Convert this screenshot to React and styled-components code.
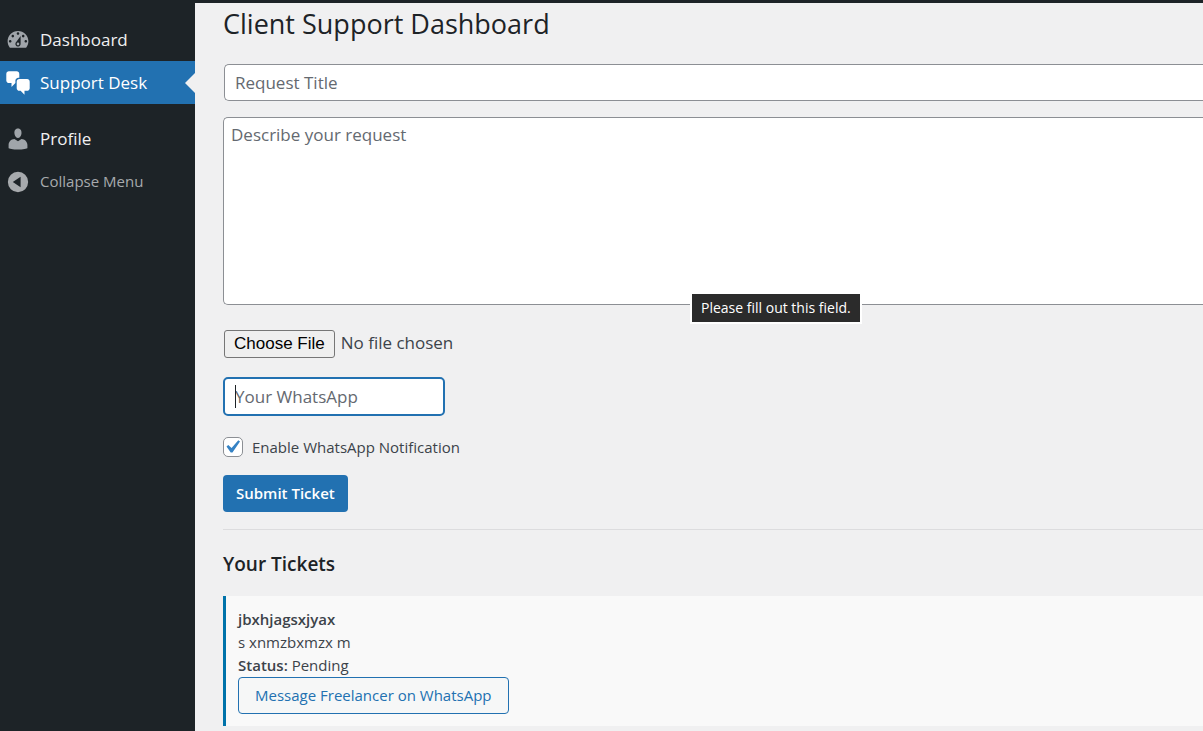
import React, { useState } from 'react'
import styled, { createGlobalStyle } from 'styled-components'

const GlobalStyle = createGlobalStyle`
    *, *::before, *::after {
      box-sizing: border-box;
    }

    body {
      margin: 0;
      background-color: #f0f0f1;
      color: #3c434a;
      font-family: 'Open Sans', 'Noto Sans', sans-serif;
      font-size: 15px;
      line-height: 23px;
    }
`

const Page = styled.div`
    display: flex;
    min-height: 100vh;
    border-top: 3px solid #1d2327;
    overflow: hidden;
`

const Sidebar = styled.nav`
    flex: 0 0 195px;
    padding-top: 15px;
    background-color: #1d2327;
`

const MenuList = styled.ul`
    margin: 0;
    padding: 0;
    list-style: none;
`

const MenuItem = styled.li`
    margin-top: ${(props) => (props.$spaced ? '13px' : '0')};
`

const MenuLink = styled.a`
    position: relative;
    display: flex;
    align-items: center;
    gap: 9px;
    height: 43px;
    padding-left: 5px;
    background-color: ${(props) => (props.$current ? '#2271b1' : 'transparent')};
    color: ${(props) => (props.$current ? '#ffffff' : '#f0f0f1')};
    font-size: 17px;
    text-decoration: none;

    svg {
      fill: ${(props) => (props.$current ? '#ffffff' : '#a0a5aa')};
    }

    &::after {
      content: '';
      display: ${(props) => (props.$current ? 'block' : 'none')};
      position: absolute;
      right: 0;
      border: 10px solid transparent;
      border-right-color: #f0f0f1;
      border-left: 0;
    }
`

const CollapseButton = styled.button`
    display: flex;
    align-items: center;
    gap: 9px;
    width: 100%;
    height: 43px;
    padding: 0 0 0 5px;
    border: 0;
    background: none;
    color: #a7aaad;
    font: inherit;
    cursor: pointer;

    svg {
      fill: #a7aaad;
    }
`

const Content = styled.main`
    flex: 1;
    min-width: 0;
    padding-left: 28px;
`

const Title = styled.h1`
    margin: 0;
    padding-top: 2px;
    color: #1d2327;
    font-size: 27px;
    font-weight: 400;
    line-height: 38px;
`

const TicketForm = styled.form`
    display: flex;
    flex-direction: column;
    align-items: flex-start;
    padding: 21px 0 17px;
    border-bottom: 1px solid #dcdcde;
`

const TitleInput = styled.input`
    align-self: stretch;
    height: 37px;
    margin: 0 0 16px 1px;
    padding: 0 10px;
    border: 1px solid #8c8f94;
    border-right: 0;
    border-radius: 5px 0 0 5px;
    background-color: #ffffff;
    font: inherit;
    font-size: 17px;

    &::placeholder {
      color: #646970;
    }
`

const DescriptionField = styled.div`
    position: relative;
    display: flex;
    align-self: stretch;
    margin-bottom: 25px;
`

const Description = styled.textarea`
    flex: 1;
    height: 188px;
    padding: 4px 7px;
    border: 1px solid #8c8f94;
    border-right: 0;
    border-radius: 5px 0 0 5px;
    background-color: #ffffff;
    font: inherit;
    font-size: 17px;
    line-height: 26px;
    resize: none;

    &::placeholder {
      color: #646970;
    }
`

const Tooltip = styled.div`
    position: absolute;
    bottom: -19px;
    left: 467px;
    padding: 2px 9px 3px;
    border: 2px solid #ffffff;
    background-color: #2b2b2b;
    color: #ffffff;
    box-sizing: content-box;
    font-size: 14px;
    white-space: nowrap;
`

const FileInput = styled.input`
    height: 30px;
    margin: 0 0 17px 1px;
    color: #3c434a;
    font: inherit;
    font-size: 17px;
    line-height: 26px;

    &::file-selector-button {
      height: 28px;
      margin: 0 6px 0 0;
      padding: 0 9px;
      border: 1px solid #767676;
      border-radius: 3px;
      background-color: #efefef;
      color: #000000;
      font: 17px 'Liberation Sans', Arial, sans-serif;
    }
`

const PhoneField = styled.div`
    position: relative;
    display: flex;
    margin-bottom: 21px;
`

const PhoneInput = styled.input`
    width: 222px;
    height: 39px;
    padding: 0 10px;
    border: 2px solid #2271b1;
    border-radius: 5px;
    outline: 0;
    background-color: #ffffff;
    caret-color: transparent;
    font: inherit;
    font-size: 17px;

    &::placeholder {
      color: #646970;
    }
`

const Caret = styled.span`
    position: absolute;
    top: 8px;
    left: 12px;
    width: 1px;
    height: 23px;
    background-color: #1d2327;
`

const NotifyLabel = styled.label`
    display: flex;
    align-items: center;
    gap: 9px;
    height: 20px;
    margin-bottom: 18px;
`

const Checkbox = styled.input`
    appearance: none;
    width: 20px;
    height: 20px;
    margin: 0;
    border: 1px solid #8c8f94;
    border-radius: 5px;
    background-color: #ffffff;

    &:checked {
      background-image: url("data:image/svg+xml,%3Csvg xmlns='http://www.w3.org/2000/svg' viewBox='0 0 20 20'%3E%3Cpath d='M14.83 4.89l1.34.94-5.81 8.38H9.02L5.78 9.67l1.34-1.25 2.57 2.4z' fill='%233582c4'/%3E%3C/svg%3E");
      background-position: -5px -4px;
      background-repeat: no-repeat;
      background-size: 26px 26px;
    }
`

const SubmitButton = styled.button`
    height: 37px;
    padding: 0 13px;
    border: 0;
    border-radius: 4px;
    background-color: #2271b1;
    color: #ffffff;
    font: inherit;
    font-weight: 600;
    cursor: pointer;
`

const SectionTitle = styled.h2`
    margin: 20px 0 17px;
    color: #1d2327;
    font-size: 19px;
    font-weight: 600;
    line-height: 29px;
`

const Ticket = styled.article`
    padding: 12px;
    border-left: 3px solid #0073aa;
    background-color: #f9f9f9;
`

const TicketLine = styled.div`
    font-weight: ${(props) => (props.$strong ? '600' : '400')};

    strong {
      font-weight: 600;
    }
`

const MessageLink = styled.a`
    display: inline-flex;
    align-items: center;
    height: 37px;
    padding: 0 16px;
    border: 1px solid #2271b1;
    border-radius: 4px;
    background-color: #f6f7f7;
    color: #2271b1;
    text-decoration: none;
    vertical-align: top;
`

const icons = {
  dashboard:
    'M3.76 16h12.48c1.1-1.37 1.76-3.11 1.76-5 0-4.42-3.58-8-8-8s-8 3.58-8 8c0 1.89.66 3.63 1.76 5zM10 4c.55 0 1 .45 1 1s-.45 1-1 1-1-.45-1-1 .45-1 1-1zM6 6c.55 0 1 .45 1 1s-.45 1-1 1-1-.45-1-1 .45-1 1-1zm8 0c.55 0 1 .45 1 1s-.45 1-1 1-1-.45-1-1 .45-1 1-1zm-5.37 5.55L12 7v6c0 1.1-.9 2-2 2s-2-.9-2-2c0-.57.24-1.08.63-1.45zM4 10c.55 0 1 .45 1 1s-.45 1-1 1-1-.45-1-1 .45-1 1-1zm12 0c.55 0 1 .45 1 1s-.45 1-1 1-1-.45-1-1 .45-1 1-1zm-5 3c0-.55-.45-1-1-1s-1 .45-1 1 .45 1 1 1 1-.45 1-1z',
  chat: 'M11 6h-.82C9.07 6 8 7.2 8 8.16V10l-3 3v-3H3c-1.1 0-2-.9-2-2V3c0-1.1.9-2 2-2h6c1.1 0 2 .9 2 2v3zm0 1h6c1.1 0 2 .9 2 2v5c0 1.1-.9 2-2 2h-2v3l-3-3h-1c-1.1 0-2-.9-2-2V9c0-1.1.9-2 2-2z',
  user: 'M10 9.25c-2.27 0-2.73-3.44-2.73-3.44C7 4.02 7.82 2 9.97 2c2.16 0 2.98 2.02 2.71 3.81 0 0-.41 3.44-2.68 3.44zm0 2.57L12.72 10c2.39 0 4.52 2.33 4.52 4.53v2.49s-3.65 1.13-7.24 1.13c-3.65 0-7.24-1.13-7.24-1.13v-2.49c0-2.25 1.94-4.48 4.47-4.48z',
  collapse: 'M10 2.2a7.8 7.8 0 1 0 0 15.6a7.8 7.8 0 1 0 0-15.6zM12 6v8l-6-4z',
}

const Icon = ({ name }) => (
  <svg width="26" height="26" viewBox="0 0 20 20" fillRule="evenodd" aria-hidden="true">
    <path d={icons[name]} />
  </svg>
)

const menu = [
  { label: 'Dashboard', icon: 'dashboard' },
  { label: 'Support Desk', icon: 'chat', current: true },
  { label: 'Profile', icon: 'user', spaced: true },
]

const App = () => {
  const [notify, setNotify] = useState(true)

  return (
    <>
      <GlobalStyle />
      <Page>
        <Sidebar>
          <MenuList>
            {menu.map((item) => (
              <MenuItem key={item.label} $spaced={item.spaced}>
                <MenuLink href="#" $current={item.current}>
                  <Icon name={item.icon} />
                  {item.label}
                </MenuLink>
              </MenuItem>
            ))}
            <MenuItem>
              <CollapseButton type="button">
                <Icon name="collapse" />
                Collapse Menu
              </CollapseButton>
            </MenuItem>
          </MenuList>
        </Sidebar>
        <Content>
          <Title>Client Support Dashboard</Title>
          <TicketForm onSubmit={(e) => e.preventDefault()}>
            <TitleInput type="text" placeholder="Request Title" aria-label="Request Title" required />
            <DescriptionField>
              <Description placeholder="Describe your request" aria-label="Describe your request" required />
              <Tooltip role="tooltip">Please fill out this field.</Tooltip>
            </DescriptionField>
            <FileInput type="file" aria-label="Attachment" />
            <PhoneField>
              <PhoneInput type="text" placeholder="Your WhatsApp" aria-label="Your WhatsApp" />
              <Caret />
            </PhoneField>
            <NotifyLabel>
              <Checkbox type="checkbox" checked={notify} onChange={(e) => setNotify(e.target.checked)} />
              Enable WhatsApp Notification
            </NotifyLabel>
            <SubmitButton type="submit">Submit Ticket</SubmitButton>
          </TicketForm>
          <SectionTitle>Your Tickets</SectionTitle>
          <Ticket>
            <TicketLine $strong>jbxhjagsxjyax</TicketLine>
            <TicketLine>s xnmzbxmzx m</TicketLine>
            <TicketLine>
              <strong>Status:</strong> Pending
            </TicketLine>
            <MessageLink href="#">Message Freelancer on WhatsApp</MessageLink>
          </Ticket>
        </Content>
      </Page>
    </>
  )
}

export default App
